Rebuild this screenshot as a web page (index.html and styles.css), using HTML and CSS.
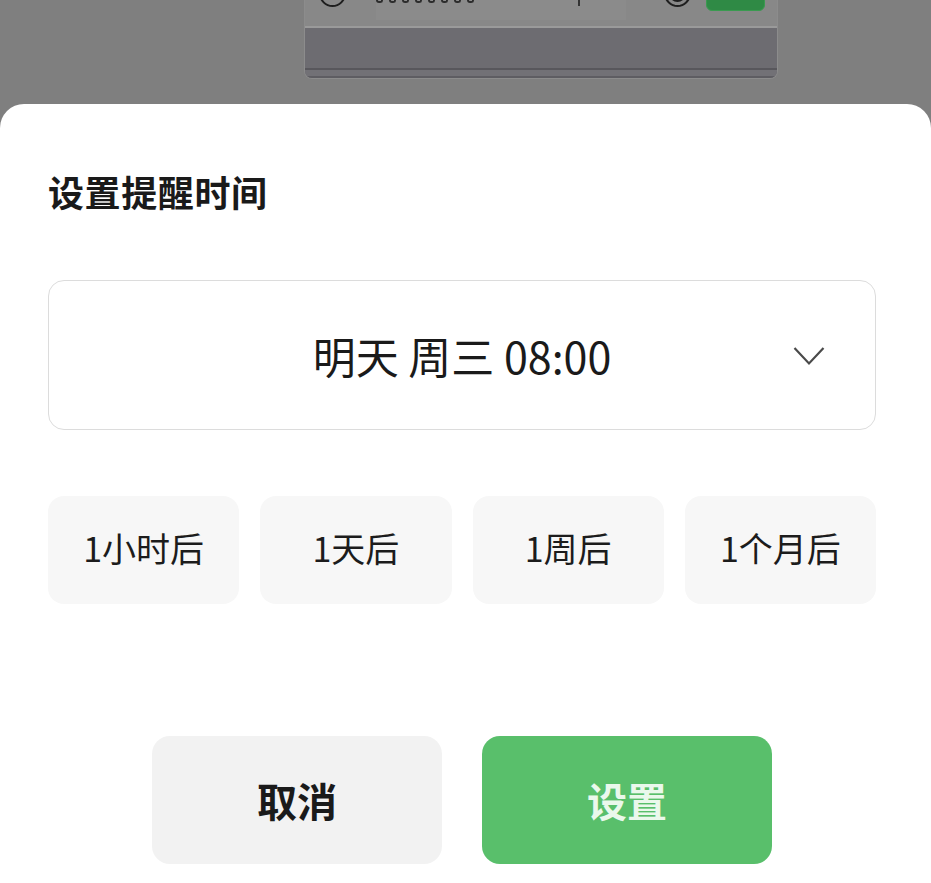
FILE: index.html
```html
<!DOCTYPE html>
<html lang="zh-CN">
<head>
<meta charset="utf-8">
<title>设置提醒时间</title>
<link rel="stylesheet" href="styles.css">
</head>
<body>
<div class="screen">
  <div class="backdrop">
    <div class="bg-card">
      <div class="bg-row">
        <span class="bg-circle"></span>
        <span class="bg-input">
          <span class="bg-scribble"><i></i><i></i><i></i><i></i><i></i><i></i><i></i><i></i></span>
          <span class="bg-cursor"></span>
        </span>
        <span class="bg-circle bg-circle-dot"></span>
        <span class="bg-send"></span>
      </div>
      <div class="bg-panel"></div>
      <div class="bg-edge"></div>
    </div>
  </div>
  <div class="sheet">
    <h1 class="title">设置提醒时间</h1>
    <div class="picker">
      <span class="picker-spacer"></span>
      <span class="picker-text">明天 周三 08:00</span>
      <svg class="chevron" viewBox="0 0 32 20" width="32" height="20" aria-hidden="true">
        <path d="M1.5 2 L16 17.5 L30.5 2" fill="none" stroke="#4a4a4a" stroke-width="2.2" stroke-linejoin="miter"/>
      </svg>
    </div>
    <div class="quick">
      <div class="quick-item">1小时后</div>
      <div class="quick-item">1天后</div>
      <div class="quick-item">1周后</div>
      <div class="quick-item">1个月后</div>
    </div>
    <div class="actions">
      <button class="btn btn-cancel">取消</button>
      <button class="btn btn-ok">设置</button>
    </div>
  </div>
</div>
</body>
</html>
```
FILE: styles.css
```css
* { box-sizing: border-box; }
html, body { margin: 0; padding: 0; }
body {
  width: 931px;
  height: 883px;
  overflow: hidden;
  background: #7f7f7f;
  font-family: "Noto Sans CJK SC", "Noto Sans", sans-serif;
  color: #1a1a1a;
}
.screen {
  display: flex;
  flex-direction: column;
  height: 883px;
}
.backdrop {
  height: 104px;
  flex: none;
  overflow: hidden;
  background: #7f7f7f;
}
.bg-card {
  margin: -20px 0 0 304px;
  width: 474px;
  border: 1px solid #8c8c8c;
  border-top: none;
  border-radius: 0 0 8px 8px;
  background: #6d6c71;
  overflow: hidden;
}
.bg-row {
  height: 48px;
  background: #888888;
  border-bottom: 2px solid #9a9a9a;
  display: flex;
  align-items: flex-start;
  padding: 0 12px 0 14px;
}
.bg-circle {
  width: 27px;
  height: 27px;
  border: 2.5px solid #1e1e1e;
  border-radius: 50%;
  flex: none;
}
.bg-circle-dot {
  margin-left: auto;
  box-shadow: inset 0 0 0 3px #888, inset 0 0 0 6px #1e1e1e;
}
.bg-input {
  display: flex;
  align-items: flex-start;
  margin-left: 30px;
  background: #8b8b8b;
  height: 40px;
  width: 250px;
}
.bg-scribble {
  display: flex;
  gap: 6px;
  width: 104px;
  height: 23px;
  align-items: flex-end;
}
.bg-scribble i {
  display: block;
  width: 7px;
  height: 8px;
  border: 2px solid #2c2c2c;
  border-top: none;
  border-radius: 0 0 3px 3px;
}
.bg-cursor {
  width: 2px;
  height: 26px;
  background: #333;
  margin-left: 98px;
}
.bg-send {
  width: 59px;
  height: 31px;
  margin-left: 15px;
  border-radius: 6px;
  background: #2f8a45;
  border: 1px solid #3a9a50;
}
.bg-panel {
  height: 40px;
  background: #6d6c71;
}
.bg-edge {
  height: 10px;
  border-top: 2px solid #58575c;
  background: #727176;
  box-shadow: inset 0 -2px 0 #5e5d62;
}
.sheet {
  flex: 1;
  background: #ffffff;
  border-radius: 24px 24px 0 0;
  padding: 68px 55px 0 48px;
  display: flex;
  flex-direction: column;
}
.title {
  margin: 0;
  font-size: 36px;
  line-height: 38px;
  font-weight: 700;
  letter-spacing: 0.6px;
  color: #1a1a1a;
}
.picker {
  margin-top: 70px;
  height: 150px;
  border: 1.5px solid #dcdcdc;
  border-radius: 16px;
  display: grid;
  grid-template-columns: 1fr auto 1fr;
  align-items: center;
}
.picker-text {
  font-size: 43px;
  line-height: 46px;
  font-weight: 400;
  color: #1a1a1a;
  white-space: nowrap;
}
.chevron {
  justify-self: end;
  display: block;
  margin: 2px 50px 0 0;
}
.quick {
  margin-top: 66px;
  display: grid;
  grid-template-columns: repeat(4, 1fr);
  gap: 21px;
}
.quick-item {
  height: 108px;
  border-radius: 16px;
  background: #f7f7f7;
  display: flex;
  align-items: center;
  justify-content: center;
  font-size: 34px;
  line-height: 36px;
  color: #1c1c1c;
  padding-bottom: 4px;
}
.actions {
  margin-top: 132px;
  display: flex;
  justify-content: center;
  gap: 40px;
}
.btn {
  width: 290px;
  height: 128px;
  border: none;
  border-radius: 18px;
  font-family: "Noto Sans CJK SC", "Noto Sans", sans-serif;
  font-size: 40px;
  line-height: 44px;
  font-weight: 700;
  display: flex;
  align-items: center;
  justify-content: center;
  padding: 0;
}
.btn-cancel {
  background: #f2f2f2;
  color: #1a1a1a;
}
.btn-ok {
  background: #59bf6b;
  color: #eaf8ec;
}
```
